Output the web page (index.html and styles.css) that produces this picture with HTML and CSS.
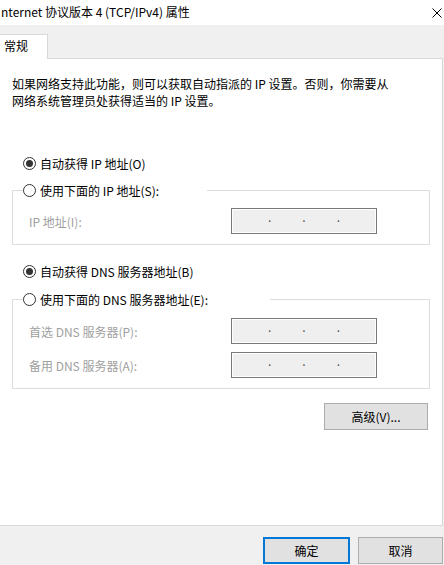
FILE: index.html
```html
<!DOCTYPE html>
<html lang="zh-CN">
<head>
<meta charset="UTF-8" />
<title>Internet 协议版本 4 (TCP/IPv4) 属性</title>
<link rel="stylesheet" href="styles.css">
</head>
<body>
<div class="dialog">
  <div class="titlebar">
    <span class="title">nternet 协议版本 4 (TCP/IPv4) 属性</span>
    <svg class="close" width="10" height="10" viewBox="0 0 10 10" aria-label="关闭">
      <path d="M0.5 0.5 L9.5 9.5 M9.5 0.5 L0.5 9.5" stroke="#000" stroke-width="1" fill="none" />
    </svg>
  </div>

  <div class="tabstrip">
    <div class="tab">常规</div>
    <div class="tab-rest"></div>
  </div>

  <div class="panel">
    <p class="desc">如果网络支持此功能，则可以获取自动指派的 IP 设置。否则，你需要从<br>网络系统管理员处获得适当的 IP 设置。</p>

    <label class="radio radio-first"><span class="dot checked"></span>自动获得 IP 地址(O)</label>

    <fieldset class="group">
      <legend class="radio ip-legend"><span class="dot"></span>使用下面的 IP 地址(S):</legend>
      <div class="field">
        <span class="label">IP 地址(I):</span>
        <div class="ipbox"><span>.</span><span>.</span><span>.</span></div>
      </div>
    </fieldset>

    <label class="radio radio-dns"><span class="dot checked"></span>自动获得 DNS 服务器地址(B)</label>

    <fieldset class="group group-dns">
      <legend class="radio dns-legend"><span class="dot"></span>使用下面的 DNS 服务器地址(E):</legend>
      <div class="field">
        <span class="label">首选 DNS 服务器(P):</span>
        <div class="ipbox"><span>.</span><span>.</span><span>.</span></div>
      </div>
      <div class="field">
        <span class="label">备用 DNS 服务器(A):</span>
        <div class="ipbox"><span>.</span><span>.</span><span>.</span></div>
      </div>
    </fieldset>

    <div class="advanced-row">
      <button class="btn advanced">高级(V)...</button>
    </div>
  </div>

  <div class="footer">
    <button class="btn ok">确定</button>
    <button class="btn">取消</button>
  </div>
</div>
</body>
</html>
```

FILE: styles.css
```css
* {
  box-sizing: border-box;
}
body {
  margin: 0;
  background: #f0f0f0;
  font-family: "Noto Sans CJK SC", sans-serif;
  font-size: 12px;
  color: #000;
  overflow: hidden;
}
.dialog {
  width: 443px;
}
.titlebar {
  width: 444px;
  height: 25px;
  background: #fff;
  display: flex;
  align-items: center;
  justify-content: space-between;
  padding: 0 2px 2px 1px;
}
.close {
  margin-top: 2px;
}
.tabstrip {
  display: flex;
  align-items: flex-end;
  height: 34px;
}
.tab {
  width: 48px;
  height: 25px;
  background: #fff;
  border-top: 1px solid #d9d9d9;
  border-right: 1px solid #d9d9d9;
  padding: 2px 0 0 4px;
  line-height: 17px;
}
.tab-rest {
  flex: 1;
  height: 1px;
  background: #d9d9d9;
}
.panel {
  background: #fff;
  height: 467px;
  border-right: 1px solid #d9d9d9;
  border-bottom: 1px solid #d9d9d9;
  padding: 16px 0 0 0;
}
.desc {
  margin: 0 0 0 12px;
  line-height: 17px;
}
.radio {
  display: flex;
  align-items: center;
  height: 17px;
  line-height: 17px;
  white-space: nowrap;
}
.dot {
  width: 13px;
  height: 13px;
  border: 1px solid #333;
  border-radius: 50%;
  margin-right: 4px;
  display: flex;
  align-items: center;
  justify-content: center;
  flex-shrink: 0;
}
.dot.checked::after {
  content: "";
  width: 7px;
  height: 7px;
  border-radius: 50%;
  background: #333;
}
.radio-first {
  margin: 46px 0 0 23px;
}
.group {
  margin: 10px 0 0 12px;
  width: 418px;
  padding: 9px 0 10px 0;
  border: 1px solid #dcdcdc;
}
.group legend {
  padding: 0;
  margin-left: 10px;
}
.ip-legend {
  width: 184px;
}
.dns-legend {
  width: 247px;
}
.radio-dns {
  margin: 18px 0 0 23px;
}
.group-dns {
  margin-top: 11px;
  padding-top: 10px;
  display: flex;
  flex-direction: column;
  gap: 8px;
}
.field {
  display: flex;
  align-items: center;
  justify-content: space-between;
  padding: 0 52px 0 16px;
}
.label {
  color: #a0a0a0;
}
.ipbox {
  width: 146px;
  height: 26px;
  border: 1px solid #7a7a7a;
  box-shadow: inset 0 0 0 1px #fff;
  background: #efefef;
  display: flex;
  justify-content: space-between;
  padding: 0 36px 8px;
  align-items: center;
  line-height: 12px;
  color: #555;
}
.advanced-row {
  display: flex;
  justify-content: flex-end;
  margin: 14px 14px 0 0;
}
.btn {
  font-family: inherit;
  font-size: 12px;
  color: #000;
  background: #e1e1e1;
  border: 1px solid #adadad;
  height: 27px;
  padding: 0;
  line-height: 17px;
}
.advanced {
  width: 104px;
}
.footer {
  display: flex;
  justify-content: flex-end;
  gap: 8px;
  margin-top: 11px;
}
.footer .btn {
  width: 85px;
}
.footer .ok {
  width: 87px;
  border: 2px solid #0078d7;
}
```
